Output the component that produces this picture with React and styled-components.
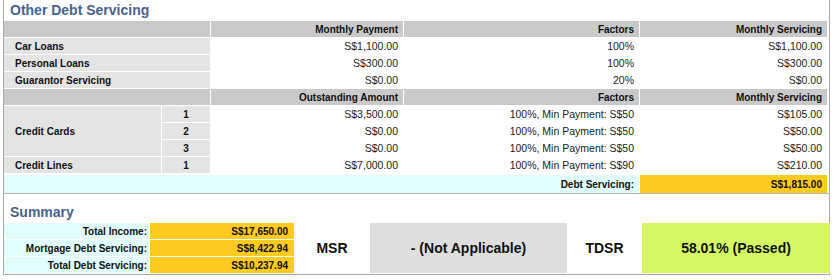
import React from "react"
import styled, { createGlobalStyle } from "styled-components"

const GlobalStyle = createGlobalStyle`
  html, body {
    margin: 0;
    padding: 0;
    background: #ffffff;
  }

  body {
    font-family: "Liberation Sans", Arial, Helvetica, sans-serif;
    color: #111111;
  }
`

const tones = {
  head: "#c9c9c9",
  label: "#e4e4e4",
  value: "#ffffff",
  cyan: "#e2fdfd",
  yellow: "#fdca1f",
  grey: "#dedede",
  green: "#d3f863",
}

const Panel = styled.div`
  box-sizing: border-box;
  width: 827px;
  margin-left: 3px;
  border: 1px solid #a9a9a9;
  border-top: none;
`

const Section = styled.section`
  padding-top: ${props => (props.$first ? "2px" : "10px")};
  border-bottom: ${props => (props.$first ? "1px solid #b4b4b4" : "none")};
  padding-bottom: ${props => (props.$first ? "0" : "1px")};
`

const Title = styled.h2`
  margin: 0 0 2px;
  padding-left: 6px;
  font-size: 14px;
  line-height: 17px;
  font-weight: bold;
  color: #48648f;
`

const DebtGrid = styled.div`
  display: grid;
  grid-template-columns: 157px 48px 192px 235px 187px;
  grid-auto-rows: 16px;
  column-gap: 1px;
  row-gap: 1px;
  padding-right: 2px;
`

const TotalRow = styled.div`
  display: grid;
  grid-template-columns: 1fr 187px;
  column-gap: 1px;
  height: 18px;
  margin-top: 2px;
  padding-right: 2px;
`

const SummaryGrid = styled.div`
  display: grid;
  grid-template-columns: 145px 144px 74px 197px 73px 188px;
  grid-template-rows: repeat(3, 16px);
  column-gap: 1px;
  row-gap: 1px;
`

const Cell = styled.div`
  box-sizing: border-box;
  grid-column: ${props => props.$col || "auto"};
  grid-row: ${props => props.$row || "auto"};
  display: flex;
  align-items: center;
  justify-content: ${props =>
    props.$align === "left"
      ? "flex-start"
      : props.$align === "center"
      ? "center"
      : "flex-end"};
  padding: ${props =>
    props.$align === "left" ? "0 0 0 11px" : props.$align === "center" ? "0" : "0 5px 0 0"};
  background: ${props => tones[props.$tone || "value"]};
  font-size: ${props => (props.$bold ? "10px" : "10.5px")};
  font-weight: ${props => (props.$bold ? "bold" : "normal")};
  color: ${props => (props.$bold ? "#111" : "#222")};
  white-space: nowrap;
`

const SumLabel = styled(Cell)`
  padding: 0 2px 0 0;
`

const SumValue = styled(Cell)`
  padding: 0 6px 0 0;
`

const BigCell = styled.div`
  grid-column: ${props => props.$col};
  grid-row: 1 / span 3;
  display: flex;
  align-items: center;
  justify-content: center;
  background: ${props => tones[props.$tone || "value"]};
  font-size: 14px;
  font-weight: bold;
  color: #111;
`

const loans = [
  { name: "Car Loans", payment: "S$1,100.00", factor: "100%", servicing: "S$1,100.00" },
  { name: "Personal Loans", payment: "S$300.00", factor: "100%", servicing: "S$300.00" },
  { name: "Guarantor Servicing", payment: "S$0.00", factor: "20%", servicing: "S$0.00" },
]

const cards = [
  { no: 1, amount: "S$3,500.00", factor: "100%, Min Payment: S$50", servicing: "S$105.00" },
  { no: 2, amount: "S$0.00", factor: "100%, Min Payment: S$50", servicing: "S$50.00" },
  { no: 3, amount: "S$0.00", factor: "100%, Min Payment: S$50", servicing: "S$50.00" },
]

const summary = [
  { label: "Total Income:", value: "S$17,650.00" },
  { label: "Mortgage Debt Servicing:", value: "S$8,422.94" },
  { label: "Total Debt Servicing:", value: "S$10,237.94" },
]

const HeaderRow = ({ first }) => (
  <>
    <Cell $tone="head" $col="span 2" />
    <Cell $tone="head" $bold>
      {first}
    </Cell>
    <Cell $tone="head" $bold>
      Factors
    </Cell>
    <Cell $tone="head" $bold>
      Monthly Servicing
    </Cell>
  </>
)

const App = () => {
  return (
    <>
      <GlobalStyle />
      <Panel>
        <Section $first>
          <Title>Other Debt Servicing</Title>
          <DebtGrid>
            <HeaderRow first="Monthly Payment" />
            {loans.map(loan => (
              <React.Fragment key={loan.name}>
                <Cell $tone="label" $col="span 2" $align="left" $bold>
                  {loan.name}
                </Cell>
                <Cell>{loan.payment}</Cell>
                <Cell>{loan.factor}</Cell>
                <Cell>{loan.servicing}</Cell>
              </React.Fragment>
            ))}
            <HeaderRow first="Outstanding Amount" />
            <Cell $tone="label" $row="span 3" $align="left" $bold>
              Credit Cards
            </Cell>
            {cards.map(card => (
              <React.Fragment key={card.no}>
                <Cell $tone="label" $col="2" $align="center" $bold>
                  {card.no}
                </Cell>
                <Cell>{card.amount}</Cell>
                <Cell>{card.factor}</Cell>
                <Cell>{card.servicing}</Cell>
              </React.Fragment>
            ))}
            <Cell $tone="label" $align="left" $bold>
              Credit Lines
            </Cell>
            <Cell $tone="label" $align="center" $bold>
              1
            </Cell>
            <Cell>S$7,000.00</Cell>
            <Cell>100%, Min Payment: S$90</Cell>
            <Cell>S$210.00</Cell>
          </DebtGrid>
          <TotalRow>
            <Cell $tone="cyan" $bold>
              Debt Servicing:
            </Cell>
            <Cell $tone="yellow" $bold>
              S$1,815.00
            </Cell>
          </TotalRow>
        </Section>
        <Section>
          <Title>Summary</Title>
          <SummaryGrid>
            {summary.map((row, i) => (
              <React.Fragment key={row.label}>
                <SumLabel $tone="cyan" $col="1" $row={i + 1} $bold>
                  {row.label}
                </SumLabel>
                <SumValue $tone="yellow" $col="2" $row={i + 1} $bold>
                  {row.value}
                </SumValue>
              </React.Fragment>
            ))}
            <BigCell $col="3">MSR</BigCell>
            <BigCell $col="4" $tone="grey">
              - (Not Applicable)
            </BigCell>
            <BigCell $col="5">TDSR</BigCell>
            <BigCell $col="6" $tone="green">
              58.01% (Passed)
            </BigCell>
          </SummaryGrid>
        </Section>
      </Panel>
    </>
  )
}

export default App
